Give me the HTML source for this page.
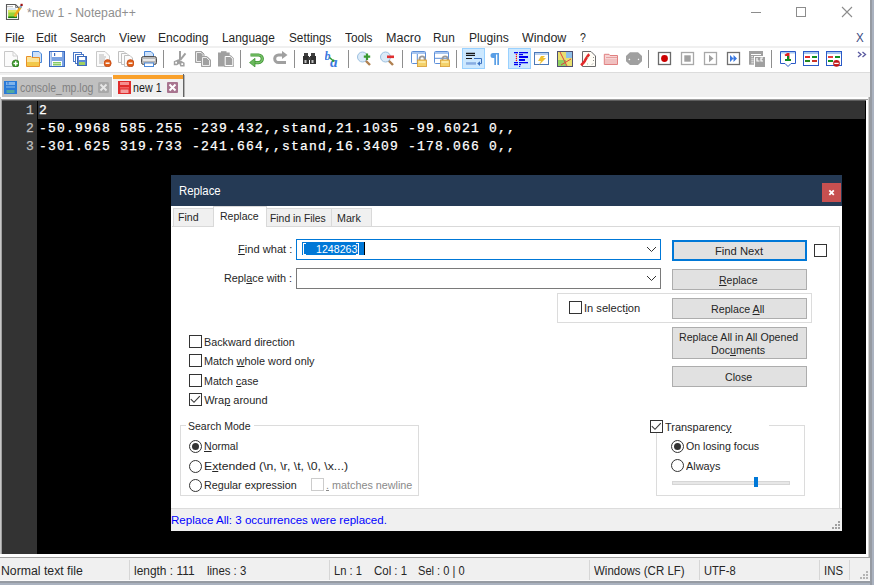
<!DOCTYPE html>
<html><head><meta charset="utf-8"><style>
*{margin:0;padding:0;box-sizing:border-box}
html,body{width:874px;height:585px;overflow:hidden;background:#aab2bf;font-family:"Liberation Sans",sans-serif}
.a{position:absolute}
.t{position:absolute;white-space:pre;line-height:1;transform-origin:0 0;font-family:"Liberation Sans",sans-serif}
.m{position:absolute;white-space:pre;line-height:18px;font-family:"Liberation Mono",monospace;font-size:13px;letter-spacing:1.2px;-webkit-text-stroke:0.25px}
u{text-decoration:underline;text-underline-offset:1px;text-decoration-thickness:1px}
.ic{position:absolute;width:16px;height:16px;top:51px}
.cb{position:absolute;width:13px;height:13px;border:1px solid #333;background:#fff}
.btn{position:absolute;background:#e1e1e1;border:1px solid #adadad}
.grp{position:absolute;border:1px solid #dcdcdc}
.sep{position:absolute;width:1px;top:50px;height:18px;background:#8e8e8e}
.ssep{position:absolute;width:1px;top:560px;height:20px;background:#d6d6d6}
</style></head><body>
<!-- window -->
<div class="a" style="left:0;top:0;width:870px;height:581px;background:#fff"></div>
<div class="a" style="left:870px;top:0;width:2px;height:585px;background:#969ba3"></div>
<div class="a" style="left:0;top:581px;width:872px;height:2px;background:#969ba3"></div>
<!-- menu line -->
<div class="a" style="left:0;top:46px;width:870px;height:2px;background:#f0f0f0"></div>
<!-- toolbar bottom line -->
<div class="a" style="left:0;top:72px;width:870px;height:1px;background:#dcdcdc"></div>
<!-- tab bar -->
<div class="a" style="left:0;top:73px;width:870px;height:24px;background:#f0f0f0"></div>
<div class="a" style="left:0;top:75px;width:113px;height:22px;background:#fff"></div>
<div class="a" style="left:2px;top:77px;width:110px;height:20px;background:#c0c0c0"></div>
<div class="a" style="left:113px;top:75px;width:71px;height:22px;background:#f0f0f0"></div>
<div class="a" style="left:113px;top:75px;width:70px;height:4px;background:#f9a12c"></div>
<div class="a" style="left:183px;top:74px;width:1px;height:24px;background:#646464"></div>
<div class="a" style="left:184px;top:75px;width:1px;height:23px;background:#b4b4b4"></div>
<!-- editor frame -->
<div class="a" style="left:0;top:97px;width:870px;height:460px;background:#fff"></div>
<div class="a" style="left:0;top:97px;width:1px;height:457px;background:#c8c8c8"></div>
<div class="a" style="left:1px;top:99px;width:1px;height:455px;background:#a0a0a0"></div>
<div class="a" style="left:1px;top:99px;width:867px;height:1px;background:#a0a0a0"></div>
<div class="a" style="left:868px;top:97px;width:1px;height:460px;background:#d0d0d0"></div>
<div class="a" style="left:869px;top:97px;width:1px;height:460px;background:#a0a0a0"></div>
<div class="a" style="left:2px;top:100px;width:864px;height:454px;background:#000"></div>
<div class="a" style="left:2px;top:100px;width:35px;height:454px;background:#333"></div>
<div class="a" style="left:2px;top:100px;width:864px;height:1px;background:#5e5e5e"></div>
<div class="a" style="left:38px;top:101px;width:827px;height:18px;background:#333"></div>
<!-- editor text -->
<div class="m" style="left:0;top:102px;width:35px;text-align:right;color:#c0c0c0">1<br>2<br>3</div>
<div class="m" style="left:39px;top:102px;color:#fff">2<br>-50.9968 585.255 -239.432,,stand,21.1035 -99.6021 0,,<br>-301.625 319.733 -241.664,,stand,16.3409 -178.066 0,,</div>
<!-- status bar -->
<div class="a" style="left:0;top:557px;width:870px;height:1px;background:#a0a0a0"></div>
<div class="a" style="left:0;top:558px;width:870px;height:23px;background:#f0f0f0"></div>
<div class="a" style="left:0;top:580px;width:870px;height:1px;background:#fafafa"></div>
<div class="ssep" style="left:129px"></div>
<div class="ssep" style="left:329px"></div>
<div class="ssep" style="left:589px"></div>
<div class="ssep" style="left:699px"></div>
<div class="ssep" style="left:819px"></div>
<div class="ssep" style="left:849px"></div>
<svg class="a" style="left:859px;top:570px" width="10" height="10" viewBox="0 0 10 10" fill="#b4b4b4"><rect x="7" y="1" width="2" height="2"/><rect x="4" y="4" width="2" height="2"/><rect x="7" y="4" width="2" height="2"/><rect x="1" y="7" width="2" height="2"/><rect x="4" y="7" width="2" height="2"/><rect x="7" y="7" width="2" height="2"/></svg>
<!-- title buttons -->
<div class="a" style="left:751px;top:12px;width:10px;height:1px;background:#8c8c8c"></div>
<div class="a" style="left:796px;top:7px;width:10px;height:10px;border:1px solid #8c8c8c"></div>
<svg class="a" style="left:841px;top:6px" width="12" height="12" viewBox="0 0 12 12"><path d="M1 1L11 11M11 1L1 11" stroke="#8c8c8c" stroke-width="1.1"/></svg>
<!-- app icon -->
<svg class="a" style="left:5px;top:3px" width="18" height="18" viewBox="0 0 18 18">
<path d="M1.5 1.5H10.5L13.5 4.5V16.5H1.5Z" fill="#fff" stroke="#5a5a5a" stroke-width="1.1"/>
<path d="M10.5 1.5V4.5H13.5" fill="none" stroke="#707070" stroke-width="0.8"/>
<path d="M3 3V4.2M5 3V4.2M7 3V4.2" stroke="#808080" stroke-width="1"/>
<rect x="3.2" y="5.5" width="8" height="1" fill="#b8d0e8"/>
<rect x="3.2" y="7" width="8.8" height="8" fill="#9ad43a"/>
<rect x="3.2" y="7" width="8.8" height="2.5" fill="#e0e860"/>
<rect x="3.2" y="13.5" width="8.8" height="1.6" fill="#1a7a10"/>
<path d="M9.5 13.5L16 3.5" stroke="#f0a818" stroke-width="2.4"/>
<path d="M15 5L16.5 2.5" stroke="#80a8d0" stroke-width="2"/>
<rect x="15.5" y="0.8" width="2.2" height="2.2" fill="#a01010"/>
</svg>
<!-- toolbar separators -->
<div class="sep" style="left:163px"></div>
<div class="sep" style="left:240px"></div>
<div class="sep" style="left:294px"></div>
<div class="sep" style="left:348px"></div>
<div class="sep" style="left:402px"></div>
<div class="sep" style="left:456px"></div>
<div class="sep" style="left:648px"></div>
<div class="sep" style="left:771px"></div>
<!-- new -->
<svg class="ic" style="left:3px" viewBox="0 0 16 16">
<path d="M1.5 0.5H10L14.5 5V15.5H1.5Z" fill="#fbfbfb" stroke="#c8c8c8"/>
<path d="M10 0.5V5H14.5" fill="none" stroke="#d0d0d0"/>
<circle cx="12.7" cy="12.5" r="3.6" fill="#3a9a2a" stroke="#2a6a1a" stroke-width="0.6"/>
<path d="M12.7 10.3V14.7M10.5 12.5H14.9" stroke="#fff" stroke-width="1.4"/>
</svg>
<!-- open -->
<svg class="ic" style="left:26px" viewBox="0 0 16 16">
<path d="M6.5 0.5H13L15.5 3V11.5H6.5Z" fill="#cfe2fa" stroke="#4a88d8"/>
<path d="M0.5 5.5H5L6 6.5H13.5V15.5H0.5Z" fill="#fbe49a" stroke="#e8902a"/>
<rect x="1" y="11" width="12" height="4" fill="#f2c84a"/>
</svg>
<!-- save -->
<svg class="ic" style="left:49px" viewBox="0 0 16 16">
<rect x="0.5" y="0.5" width="15" height="15" fill="#7aa2e2" stroke="#3a6ac0"/>
<rect x="1" y="1" width="1.5" height="14" fill="#c0d4f4"/>
<rect x="3" y="1" width="10" height="5" fill="#fff"/>
<rect x="5" y="2" width="1.2" height="3" fill="#3a6ac0"/>
<rect x="3" y="10" width="10" height="5" fill="#fff"/>
<rect x="4" y="11.2" width="8" height="1.2" fill="#6cc040"/>
<rect x="4" y="13.2" width="8" height="1.2" fill="#6cc040"/>
</svg>
<!-- save all -->
<svg class="ic" style="left:72px" viewBox="0 0 16 16">
<rect x="1.5" y="1.5" width="8" height="9" fill="#fff" stroke="#4a78c8"/>
<rect x="3.5" y="3.5" width="8" height="9" fill="#fff" stroke="#4a78c8"/>
<rect x="5.5" y="5.5" width="9" height="9" fill="#5b8ad6" stroke="#3a68b8"/>
<rect x="7" y="6" width="6" height="3" fill="#fff"/>
<rect x="7" y="11" width="6" height="3" fill="#a0d060"/>
</svg>
<!-- close -->
<svg class="ic" style="left:96px" viewBox="0 0 16 16">
<path d="M0.5 0.5H9L13.5 5V15.5H0.5Z" fill="#fbfbfb" stroke="#c8c8c8"/>
<path d="M3 4H8M3 6H10M3 8H9M3 10H8M3 12H7" stroke="#8a8a8a" stroke-width="0.6"/>
<circle cx="11.6" cy="12.2" r="3.6" fill="#e0601a" stroke="#b84010" stroke-width="0.6"/>
<path d="M9.6 12.2H13.6" stroke="#fff" stroke-width="1.4"/>
</svg>
<!-- close all -->
<svg class="ic" style="left:118px" viewBox="0 0 16 16">
<path d="M0.5 0.5H6L8.5 3V11.5H0.5Z" fill="#fbfbfb" stroke="#c0c0c0"/>
<path d="M3.5 2.5H9L11.5 5V13.5H3.5Z" fill="#fbfbfb" stroke="#c0c0c0"/>
<path d="M6.5 4.5H12L14.5 7V15.5H6.5Z" fill="#fbfbfb" stroke="#c0c0c0"/>
<circle cx="12.5" cy="12.2" r="3.6" fill="#e0601a" stroke="#b84010" stroke-width="0.6"/>
<path d="M10.5 12.2H14.5" stroke="#fff" stroke-width="1.4"/>
</svg>
<!-- print -->
<svg class="ic" style="left:141px" viewBox="0 0 16 16">
<path d="M3.5 0.5H10L12.5 3V7H3.5Z" fill="#cfe2fa" stroke="#4a88d8"/>
<rect x="0.5" y="5.5" width="15" height="8" rx="2" fill="#b8b8b8" stroke="#505050"/>
<rect x="2" y="8" width="12" height="2" fill="#e8e8e8"/>
<rect x="3.5" y="12" width="9" height="3.5" fill="#fff" stroke="#4a88d8"/>
</svg>
<!-- cut -->
<svg class="ic" style="left:172px" viewBox="0 0 16 16">
<path d="M8 0V9" stroke="#a0a0a0" stroke-width="2"/>
<path d="M13.5 2.3L8.3 8.8" stroke="#a0a0a0" stroke-width="2"/>
<path d="M1.8 10.2L6.5 8.3L8.6 9.6L12.6 11.8L12.6 15.5L8.4 15.5L7.3 12.8L5 14.2L1.8 14.2Z" fill="#a0a0a0"/>
<rect x="3.2" y="10.8" width="1.8" height="1.8" fill="#fff"/>
<rect x="9.3" y="12.2" width="1.8" height="1.8" fill="#fff"/>
</svg>
<!-- copy -->
<svg class="ic" style="left:195px" viewBox="0 0 16 16">
<path d="M0.5 0.5H6.5L9 3V11.5H0.5Z" fill="#a0a0a0" stroke="#a0a0a0"/>
<path d="M1.5 1.5H6L8 3.5V10.5H1.5Z" fill="#a0a0a0" stroke="#fff" stroke-width="0.8"/>
<path d="M6.5 5.5H12L15.5 9V15.5H6.5Z" fill="#a0a0a0" stroke="#a0a0a0"/>
<path d="M7.5 6.5H11.5L14.5 9.5V14.5H7.5Z" fill="#a0a0a0" stroke="#fff" stroke-width="0.8"/>
</svg>
<!-- paste -->
<svg class="ic" style="left:218px" viewBox="0 0 16 16">
<rect x="0" y="1.5" width="11.7" height="14" fill="#a0a0a0"/>
<rect x="3" y="0.2" width="5.5" height="2" fill="#a0a0a0"/>
<path d="M6 4.3H12.8L16 7.5V15.7H6Z" fill="#a0a0a0"/>
<path d="M7.2 5.5H12.3L14.8 8V14.5H7.2Z" fill="none" stroke="#fff" stroke-width="1"/>
</svg>
<!-- undo -->
<svg class="ic" style="left:249px" viewBox="0 0 16 16">
<path d="M1.5 4H9.5A3.8 3.8 0 0 1 9.5 11.6H5" fill="none" stroke="#3c9232" stroke-width="3.2"/>
<path d="M2 4H9.5A3.8 3.8 0 0 1 9.5 11.6H5" fill="none" stroke="#78c268" stroke-width="1.6"/>
<path d="M0.5 11.6L6 7.3V15.9Z" fill="#6ab85c" stroke="#3c9232" stroke-width="0.7"/>
</svg>
<!-- redo -->
<svg class="ic" style="left:272px" viewBox="0 0 16 16">
<path d="M14 11.6H6.5A3.8 3.8 0 0 1 6.5 4H11" fill="none" stroke="#a0a0a0" stroke-width="3"/>
<path d="M15.5 4L10 -0.1V8.1Z" fill="#a0a0a0"/>
</svg>
<!-- find -->
<svg class="ic" style="left:302px" viewBox="0 0 16 16">
<rect x="2" y="2" width="4" height="4" fill="#404040"/>
<rect x="9" y="2" width="4" height="4" fill="#404040"/>
<rect x="1" y="5" width="6" height="8" fill="#303030"/>
<rect x="8" y="5" width="6" height="8" fill="#303030"/>
<rect x="6" y="6" width="3" height="3" fill="#404040"/>
<rect x="2.5" y="9" width="2" height="3" fill="#c0c0c0"/>
<rect x="9.5" y="9" width="2" height="3" fill="#c0c0c0"/>
</svg>
<!-- replace -->
<svg class="a" style="left:325px;top:51px" width="18" height="16" viewBox="0 0 18 16">
<text x="-0.5" y="8.5" font-family="Liberation Serif" font-style="italic" font-weight="bold" font-size="12" fill="#3a78e0">b</text>
<text x="5" y="15.8" font-family="Liberation Serif" font-style="italic" font-weight="bold" font-size="15" fill="#3a78e0">a</text>
<path d="M4.5 6.5L8.5 10" stroke="#2a9a30" stroke-width="1.5"/>
<path d="M9.5 11L6.5 10.5L9 8Z" fill="#2a9a30"/>
</svg>
<!-- zoom in -->
<svg class="ic" style="left:356px" viewBox="0 0 16 16">
<path d="M9 9L14 14" stroke="#b08050" stroke-width="2.4"/>
<circle cx="6.5" cy="6" r="5" fill="#dbeaf8" stroke="#9cc0e0"/>
<path d="M11 2.5V9M7.8 5.7H14.2" stroke="#3a9a30" stroke-width="2.2"/>
</svg>
<!-- zoom out -->
<svg class="ic" style="left:379px" viewBox="0 0 16 16">
<path d="M9 9L14 14" stroke="#b08050" stroke-width="2.4"/>
<circle cx="6.5" cy="6" r="5" fill="#dbeaf8" stroke="#9cc0e0"/>
<rect x="8" y="4.5" width="7" height="2.6" fill="#e03030"/>
</svg>
<!-- sync v -->
<svg class="ic" style="left:411px" viewBox="0 0 16 16">
<rect x="0.5" y="0.5" width="14" height="12" rx="1" fill="#fff" stroke="#5c8ed8"/>
<rect x="1" y="1" width="13" height="2" fill="#a8c6f0"/>
<path d="M6.3 3V12.5" stroke="#5c8ed8"/>
<path d="M8.5 9V8A2.6 2.6 0 0 1 13.7 8V9" fill="none" stroke="#9a9a9a" stroke-width="1.9"/>
<rect x="6.5" y="9" width="9" height="6.6" fill="#f4d26a" stroke="#d89a30" stroke-width="0.8"/>
<rect x="7.5" y="10" width="7" height="2" fill="#fbe8a0"/>
</svg>
<!-- sync h -->
<svg class="ic" style="left:434px" viewBox="0 0 16 16">
<rect x="0.5" y="0.5" width="14" height="12" rx="1" fill="#fff" stroke="#5c8ed8"/>
<rect x="1" y="1" width="13" height="2" fill="#a8c6f0"/>
<path d="M1 7.3H14" stroke="#5c8ed8"/>
<path d="M8.5 9V8A2.6 2.6 0 0 1 13.7 8V9" fill="none" stroke="#9a9a9a" stroke-width="1.9"/>
<rect x="6.5" y="9" width="9" height="6.6" fill="#f4d26a" stroke="#d89a30" stroke-width="0.8"/>
<rect x="7.5" y="10" width="7" height="2" fill="#fbe8a0"/>
</svg>
<!-- wrap highlight -->
<div class="a" style="left:462px;top:48px;width:23px;height:21px;background:#cce8ff;border:1px solid #99d1ff"></div>
<svg class="ic" style="left:466px" viewBox="0 0 16 16">
<path d="M0 2.4H9M0 4.4H9M0 7.5H6" stroke="#1a1a1a" stroke-width="1.1"/>
<path d="M8 7.5H15.5V12.6H13.5" fill="none" stroke="#3a70c0" stroke-width="1"/>
<path d="M11.2 12.6L14 10.3V14.9Z" fill="#3a70c0"/>
<rect x="0" y="11.2" width="10" height="2.5" fill="#86ace2"/>
</svg>
<!-- pilcrow -->
<svg class="ic" style="left:489px" viewBox="0 0 16 16">
<path d="M4 2H10V14H8.3V3.6H7V14H5.3V7H4A2.5 2.5 0 0 1 4 2Z" fill="#5a9fe6"/>
</svg>
<!-- indent highlight -->
<div class="a" style="left:508px;top:48px;width:23px;height:21px;background:#cce8ff;border:1px solid #99d1ff"></div>
<svg class="ic" style="left:512px" viewBox="0 0 16 16">
<g fill="#0000f0">
<rect x="2" y="1" width="4" height="1.3"/><rect x="7" y="1" width="9" height="1.3"/>
<rect x="7" y="3" width="4" height="1.2"/>
<rect x="7" y="5" width="9" height="2"/>
<rect x="7" y="8" width="6" height="2"/>
<rect x="2" y="11" width="4" height="1.3"/><rect x="7" y="11" width="9" height="1.3"/>
<rect x="2" y="13" width="4" height="1.2"/><rect x="7" y="13" width="2" height="1.2"/>
<rect x="7" y="15" width="1.2" height="1.2"/>
</g>
<g fill="#ff1010"><circle cx="4.4" cy="3.5" r="0.7"/><circle cx="4.4" cy="5.5" r="0.7"/><circle cx="4.4" cy="7.5" r="0.7"/><circle cx="4.4" cy="9.5" r="0.7"/></g>
</svg>
<!-- udl -->
<svg class="ic" style="left:534px" viewBox="0 0 16 16">
<rect x="0.5" y="1.5" width="14" height="12" fill="#fff" stroke="#4a78b8"/>
<rect x="1" y="2" width="13" height="2" fill="#b8d0f0"/>
<path d="M7 5L4 10H7L5 14L12 7H9L11 5Z" fill="#f0c030"/>
</svg>
<!-- doc map -->
<svg class="ic" style="left:557px" viewBox="0 0 16 16">
<rect x="0.5" y="0.5" width="15" height="15" fill="#e8e070" stroke="#505070"/>
<rect x="9" y="1" width="6" height="6" fill="#90c0e8"/>
<rect x="1" y="9" width="8" height="6" fill="#90d060"/>
<path d="M3 1L10 15M14 8L4 14" stroke="#e04040" stroke-width="1"/>
</svg>
<!-- function list -->
<svg class="ic" style="left:580px" viewBox="0 0 16 16">
<path d="M2.5 0.5H11L15.5 5V15.5H2.5Z" fill="#fffdf6" stroke="#6a6a6a"/>
<path d="M1 14.2C2.5 13 3.5 12 4.8 10C6 8 7 5 9.3 3.2" stroke="#e42a2a" stroke-width="2.6" fill="none"/>
<path d="M13.5 6V7M13.5 9V10M13 12.5L12 13.5" stroke="#707070" stroke-width="0.8"/>
<path d="M7.5 6V7M7.5 12.5V13.5" stroke="#80c080" stroke-width="0.8"/>
</svg>
<!-- folder workspace -->
<svg class="ic" style="left:603px" viewBox="0 0 16 16">
<path d="M1.3 3.3H6L7 4.5H14.5V13.5H1.3Z" fill="#f6d4d4" stroke="#e08080"/>
<path d="M3 6.5H14" stroke="#e8a0a0" stroke-width="1"/>
<rect x="2" y="8" width="12" height="5" fill="#f0c0c0"/>
</svg>
<!-- monitoring blob -->
<svg class="ic" style="left:626px" viewBox="0 0 16 16">
<path d="M4 1.2H12L16 5V10.2L12 14H4L0 10.2V5Z" fill="#a0a0a0"/>
<path d="M2.8 9L4 7.8M12 8.8L13 8" stroke="#fff" stroke-width="1.1"/>
</svg>
<!-- record -->
<svg class="ic" style="left:657px" viewBox="0 0 16 16">
<rect x="1.5" y="1.5" width="12" height="12" fill="#fff" stroke="#6a6a6a" stroke-width="1.3"/>
<circle cx="7.5" cy="7.5" r="3.4" fill="#cc0000"/>
</svg>
<!-- stop -->
<svg class="ic" style="left:680px" viewBox="0 0 16 16">
<rect x="1.5" y="1.5" width="12" height="12" fill="#fff" stroke="#a8a8a8" stroke-width="1.3"/>
<rect x="4.3" y="4.3" width="6.4" height="6.4" fill="#a0a0a0"/>
</svg>
<!-- play -->
<svg class="ic" style="left:703px" viewBox="0 0 16 16">
<rect x="1.5" y="1.5" width="12" height="12" fill="#fff" stroke="#a8a8a8" stroke-width="1.3"/>
<path d="M6 3.8L10.5 7.5L6 11.2Z" fill="#a0a0a0"/>
</svg>
<!-- play multiple -->
<svg class="ic" style="left:726px" viewBox="0 0 16 16">
<rect x="1.5" y="1.5" width="12" height="12" fill="#fff" stroke="#707070" stroke-width="1.3"/>
<path d="M4 4L7.5 7.5L4 11ZM7.5 4L11 7.5L7.5 11Z" fill="#3a78e0"/>
</svg>
<!-- save macro -->
<svg class="ic" style="left:749px" viewBox="0 0 16 16">
<rect x="0" y="0" width="14" height="13.7" fill="#a0a0a0"/>
<g fill="#fff"><rect x="2" y="3" width="10" height="1"/><rect x="2.5" y="5" width="1.2" height="1.2"/><rect x="5" y="5" width="3" height="1"/><rect x="9" y="5" width="3" height="1"/>
<rect x="2.5" y="7.2" width="1.2" height="1.2"/><rect x="4.5" y="7.2" width="1.2" height="1.2"/><rect x="2.5" y="9.2" width="1.2" height="1.2"/><rect x="4.5" y="9.2" width="1.2" height="1.2"/><rect x="2.5" y="11.2" width="1.2" height="1.2"/><rect x="4.5" y="11.2" width="1.2" height="1.2"/></g>
<rect x="5.5" y="5.5" width="11" height="11" fill="#a0a0a0" stroke="#fff" stroke-width="1"/>
<rect x="6" y="6" width="10" height="10" fill="#a0a0a0"/>
<path d="M8 7V10H10.5M14 7H12V10H14" stroke="#fff" stroke-width="1.2" fill="none"/>
</svg>
<!-- bookmark compare 1 -->
<svg class="ic" style="left:780px" viewBox="0 0 16 16">
<path d="M0.5 0.5H15.5V12.5H11L8 15.5L5 12.5H0.5Z" fill="#fff" stroke="#2a5ac8"/>
<rect x="1" y="1" width="14" height="1.5" fill="#a8c8f0"/>
<path d="M5 4.5L7.5 3H8.5V8" stroke="#e02020" stroke-width="2" fill="none"/>
<rect x="7" y="5" width="2" height="3" fill="#108a20"/>
<rect x="5" y="8" width="6" height="2" fill="#108a20"/>
</svg>
<!-- compare 2 -->
<svg class="ic" style="left:803px" viewBox="0 0 16 16">
<rect x="0.5" y="0.5" width="15" height="14" fill="#fff" stroke="#2a5ac8"/>
<rect x="1" y="1" width="14" height="2" fill="#a8c8f0"/>
<path d="M2 6H7M2 10H7" stroke="#e02828" stroke-width="1.8"/>
<path d="M9 6H14M9 10H14" stroke="#109020" stroke-width="1.8"/>
<path d="M2 10H7" stroke="#109020" stroke-width="1.8"/>
<path d="M9 10H14" stroke="#e02828" stroke-width="1.8"/>
</svg>
<!-- compare 3 -->
<svg class="ic" style="left:826px" viewBox="0 0 16 16">
<rect x="0.5" y="0.5" width="15" height="14" fill="#fff" stroke="#2a5ac8"/>
<rect x="1" y="1" width="14" height="2" fill="#a8c8f0"/>
<path d="M2 6H7" stroke="#e02828" stroke-width="1.8"/>
<path d="M9 6H14M2 10H7" stroke="#109020" stroke-width="1.8"/>
<circle cx="10.5" cy="12.4" r="3.3" fill="#c01818"/>
<path d="M8.3 12.4H12.7" stroke="#fff" stroke-width="1.3"/>
</svg>
<!-- chevron -->
<svg class="a" style="left:857px;top:51px" width="10" height="7" viewBox="0 0 10 7"><path d="M1 1L4 3.5L1 6M5.5 1L8.5 3.5L5.5 6" stroke="#5a5aa0" stroke-width="1.3" fill="none"/></svg>
<!-- tab icons -->
<svg class="a" style="left:4px;top:81px" width="13" height="13" viewBox="0 0 13 13">
<rect x="0" y="0" width="13" height="13" fill="#2a7ad8"/>
<rect x="2" y="1" width="9" height="3" fill="#80b4ec"/>
<rect x="3.5" y="1" width="1" height="2.5" fill="#2a6ac8"/>
<rect x="2" y="5" width="9" height="2" fill="#5a9ae0"/>
<rect x="2.5" y="9" width="8" height="3" fill="#50a8a0"/>
</svg>
<svg class="a" style="left:98px;top:82px" width="11" height="11" viewBox="0 0 11 11">
<rect x="0" y="0" width="11" height="11" rx="1.5" fill="#a8a8a8"/>
<path d="M2.5 2.5L8.5 8.5M8.5 2.5L2.5 8.5" stroke="#e6e6e6" stroke-width="2"/>
</svg>
<svg class="a" style="left:118px;top:81px" width="13" height="13" viewBox="0 0 13 13">
<rect x="0" y="0" width="13" height="13" fill="#e02c2c"/>
<rect x="2" y="1" width="9" height="3" fill="#f59090"/>
<rect x="2" y="6" width="9" height="1.5" fill="#f06060"/>
<rect x="2.5" y="8.5" width="8" height="3.5" fill="#f4a0a0"/>
</svg>
<svg class="a" style="left:167px;top:82px" width="11" height="11" viewBox="0 0 11 11">
<rect x="0" y="0" width="11" height="11" rx="1" fill="#a8748f"/>
<path d="M2.5 2.5L8.5 8.5M8.5 2.5L2.5 8.5" stroke="#fff" stroke-width="2"/>
</svg>

<!-- DIALOG -->
<div class="a" style="left:171px;top:175px;width:671px;height:356px;background:#fff"></div>
<div class="a" style="left:171px;top:175px;width:671px;height:31px;background:#253a55"></div>
<div class="a" style="left:822px;top:183px;width:19px;height:19px;background:#c75050"></div>
<svg class="a" style="left:822px;top:183px" width="19" height="19" viewBox="0 0 19 19"><path d="M7.3 7.3L11.8 11.8M11.8 7.3L7.3 11.8" stroke="#fff" stroke-width="1.8"/></svg>
<!-- tabs -->
<div class="a" style="left:172px;top:226px;width:668px;height:1px;background:#d9d9d9"></div>
<div class="a" style="left:839px;top:226px;width:1px;height:282px;background:#d9d9d9"></div>
<div class="a" style="left:173px;top:208px;width:41px;height:19px;background:#f0f0f0;border:1px solid #d9d9d9"></div>
<div class="a" style="left:266px;top:208px;width:66px;height:19px;background:#f0f0f0;border:1px solid #d9d9d9"></div>
<div class="a" style="left:331px;top:208px;width:41px;height:19px;background:#f0f0f0;border:1px solid #d9d9d9"></div>
<div class="a" style="left:213px;top:206px;width:54px;height:21px;background:#fff;border:1px solid #d9d9d9;border-bottom:none"></div>
<!-- combos -->
<div class="a" style="left:296px;top:239px;width:365px;height:21px;border:1px solid #0078d7;background:#fff"></div>
<div class="a" style="left:302px;top:242px;width:62px;height:13px;background:#0078d7"></div>
<div class="a" style="left:364px;top:242px;width:1px;height:13px;background:#000"></div>
<div class="a" style="left:303px;top:243px;width:1px;height:12px;background:#fff"></div>
<div class="a" style="left:303px;top:243px;width:3px;height:1px;background:#fff"></div>
<div class="a" style="left:303px;top:254px;width:3px;height:1px;background:#fff"></div>
<div class="a" style="left:358px;top:243px;width:1px;height:12px;background:#fff"></div>
<div class="a" style="left:356px;top:243px;width:3px;height:1px;background:#fff"></div>
<div class="a" style="left:356px;top:254px;width:3px;height:1px;background:#fff"></div>
<svg class="a" style="left:646px;top:246px" width="11" height="7" viewBox="0 0 11 7"><path d="M1 1L5.5 5.5L10 1" stroke="#333" stroke-width="1" fill="none"/></svg>
<div class="a" style="left:296px;top:268px;width:365px;height:21px;border:1px solid #7a7a7a;background:#fff"></div>
<svg class="a" style="left:646px;top:275px" width="11" height="7" viewBox="0 0 11 7"><path d="M1 1L5.5 5.5L10 1" stroke="#333" stroke-width="1" fill="none"/></svg>
<!-- buttons -->
<div class="btn" style="left:672px;top:240px;width:135px;height:21px;border:2px solid #0078d7"></div>
<div class="btn" style="left:672px;top:269px;width:135px;height:21px"></div>
<div class="btn" style="left:672px;top:298px;width:135px;height:21px"></div>
<div class="btn" style="left:672px;top:327px;width:135px;height:32px"></div>
<div class="btn" style="left:672px;top:366px;width:135px;height:21px"></div>
<div class="cb" style="left:814px;top:244px"></div>
<div class="grp" style="left:557px;top:293px;width:255px;height:30px"></div>
<div class="cb" style="left:569px;top:301px"></div>
<!-- checkboxes -->
<div class="cb" style="left:189px;top:335px"></div>
<div class="cb" style="left:189px;top:354px"></div>
<div class="cb" style="left:189px;top:374px"></div>
<div class="cb" style="left:189px;top:393px"></div>
<svg class="a" style="left:189px;top:393px" width="13" height="13" viewBox="0 0 13 13"><path d="M1.8 6.2L5 9.3L10.8 3.2" stroke="#3a3a3a" stroke-width="1.15" fill="none"/></svg>
<!-- search mode -->
<div class="grp" style="left:180px;top:425px;width:239px;height:71px"></div>
<div class="a" style="left:186px;top:420px;width:68px;height:12px;background:#fff"></div>
<svg class="a" style="left:189px;top:440px" width="13" height="13" viewBox="0 0 13 13"><circle cx="6.5" cy="6.5" r="6" stroke="#333" fill="#fff"/><circle cx="6.5" cy="6.5" r="3.5" fill="#333"/></svg>
<svg class="a" style="left:189px;top:460px" width="13" height="13" viewBox="0 0 13 13"><circle cx="6.5" cy="6.5" r="6" stroke="#333" fill="#fff"/></svg>
<svg class="a" style="left:189px;top:479px" width="13" height="13" viewBox="0 0 13 13"><circle cx="6.5" cy="6.5" r="6" stroke="#333" fill="#fff"/></svg>
<div class="cb" style="left:311px;top:478px;border-color:#cccccc"></div>
<!-- transparency -->
<div class="grp" style="left:656px;top:425px;width:149px;height:71px"></div>
<div class="a" style="left:648px;top:418px;width:121px;height:14px;background:#fff"></div>
<div class="cb" style="left:650px;top:420px"></div>
<svg class="a" style="left:650px;top:420px" width="13" height="13" viewBox="0 0 13 13"><path d="M1.8 6.2L5 9.3L10.8 3.2" stroke="#3a3a3a" stroke-width="1.15" fill="none"/></svg>
<svg class="a" style="left:671px;top:440px" width="13" height="13" viewBox="0 0 13 13"><circle cx="6.5" cy="6.5" r="6" stroke="#333" fill="#fff"/><circle cx="6.5" cy="6.5" r="3.5" fill="#333"/></svg>
<svg class="a" style="left:671px;top:459px" width="13" height="13" viewBox="0 0 13 13"><circle cx="6.5" cy="6.5" r="6" stroke="#333" fill="#fff"/></svg>
<div class="a" style="left:672px;top:481px;width:118px;height:4px;background:#e7e7e7;border:1px solid #d6d6d6"></div>
<div class="a" style="left:754px;top:477px;width:4px;height:10px;background:#0078d7"></div>
<!-- dialog status -->
<div class="a" style="left:171px;top:508px;width:671px;height:1px;background:#dcdcdc"></div>
<div class="a" style="left:171px;top:509px;width:671px;height:22px;background:#f0f0f0"></div>
<svg class="a" style="left:832px;top:521px" width="10" height="10" viewBox="0 0 10 10" fill="#a0a0a0"><rect x="6" y="0" width="2" height="2"/><rect x="3" y="3" width="2" height="2"/><rect x="6" y="3" width="2" height="2"/><rect x="0" y="6" width="2" height="2"/><rect x="3" y="6" width="2" height="2"/><rect x="6" y="6" width="2" height="2"/></svg>
<span class="t" style="left:26.5px;top:6.8px;font-size:12px;color:#8f8f8f;transform:scaleX(1.019)">*new 1 - Notepad++</span>
<span class="t" style="left:4.5px;top:31.8px;font-size:12px;color:#262626;transform:scaleX(1.003)">File</span>
<span class="t" style="left:36.4px;top:31.8px;font-size:12px;color:#262626;transform:scaleX(1.005)">Edit</span>
<span class="t" style="left:70.4px;top:31.8px;font-size:12px;color:#262626;transform:scaleX(0.936)">Search</span>
<span class="t" style="left:119.2px;top:31.8px;font-size:12px;color:#262626;transform:scaleX(1.020)">View</span>
<span class="t" style="left:158.4px;top:31.8px;font-size:12px;color:#262626;transform:scaleX(1.011)">Encoding</span>
<span class="t" style="left:222.4px;top:31.8px;font-size:12px;color:#262626;transform:scaleX(0.989)">Language</span>
<span class="t" style="left:288.6px;top:31.8px;font-size:12px;color:#262626;transform:scaleX(0.980)">Settings</span>
<span class="t" style="left:344.6px;top:31.8px;font-size:12px;color:#262626;transform:scaleX(0.982)">Tools</span>
<span class="t" style="left:385.6px;top:31.8px;font-size:12px;color:#262626;transform:scaleX(1.047)">Macro</span>
<span class="t" style="left:433.2px;top:31.8px;font-size:12px;color:#262626;transform:scaleX(0.986)">Run</span>
<span class="t" style="left:468.7px;top:31.8px;font-size:12px;color:#262626;transform:scaleX(1.009)">Plugins</span>
<span class="t" style="left:521.8px;top:31.8px;font-size:12px;color:#262626;transform:scaleX(1.040)">Window</span>
<span class="t" style="left:579.7px;top:31.8px;font-size:12px;color:#262626;transform:scaleX(0.882)">?</span>
<span class="t" style="left:855.7px;top:31.8px;font-size:12px;color:#3a4a80;transform:scaleX(0.961)">X</span>
<span class="t" style="left:20.0px;top:82.3px;font-size:12px;color:#808080;transform:scaleX(0.872)">console_mp.log</span>
<span class="t" style="left:133.3px;top:82.2px;font-size:12px;color:#1a1a1a;transform:scaleX(0.893)">new 1</span>
<span class="t" style="left:0.8px;top:564.8px;font-size:12px;color:#262626;transform:scaleX(1.022)">Normal text file</span>
<span class="t" style="left:133.8px;top:564.8px;font-size:12px;color:#262626;transform:scaleX(0.993)">length : 111</span>
<span class="t" style="left:206.9px;top:564.8px;font-size:12px;color:#262626;transform:scaleX(0.950)">lines : 3</span>
<span class="t" style="left:333.8px;top:564.8px;font-size:12px;color:#262626;transform:scaleX(0.932)">Ln : 1</span>
<span class="t" style="left:374.0px;top:564.8px;font-size:12px;color:#262626;transform:scaleX(0.954)">Col : 1</span>
<span class="t" style="left:418.2px;top:564.8px;font-size:12px;color:#262626;transform:scaleX(0.923)">Sel : 0 | 0</span>
<span class="t" style="left:593.7px;top:564.8px;font-size:12px;color:#262626;transform:scaleX(0.957)">Windows (CR LF)</span>
<span class="t" style="left:703.7px;top:564.8px;font-size:12px;color:#262626;transform:scaleX(0.929)">UTF-8</span>
<span class="t" style="left:823.6px;top:564.8px;font-size:12px;color:#262626;transform:scaleX(0.949)">INS</span>
<span class="t" style="left:178.8px;top:185.1px;font-size:12px;color:#ffffff;transform:scaleX(0.945)">Replace</span>
<span class="t" style="left:177.9px;top:212.4px;font-size:11px;color:#262626;transform:scaleX(0.967)">Find</span>
<span class="t" style="left:220.0px;top:211.2px;font-size:11px;color:#262626;transform:scaleX(0.956)">Replace</span>
<span class="t" style="left:270.0px;top:212.8px;font-size:11px;color:#262626;transform:scaleX(0.941)">Find in Files</span>
<span class="t" style="left:337.0px;top:212.8px;font-size:11px;color:#262626;transform:scaleX(0.973)">Mark</span>
<span class="t" style="left:237.7px;top:244.2px;font-size:11px;color:#262626;transform:scaleX(1.009)"><u>F</u>ind what :</span>
<span class="t" style="left:315.7px;top:244.2px;font-size:11px;color:#ffffff;transform:scaleX(0.967)">1248263</span>
<span class="t" style="left:224.0px;top:272.5px;font-size:11px;color:#262626;transform:scaleX(0.984)">Repl<u>a</u>ce with :</span>
<span class="t" style="left:714.7px;top:246.2px;font-size:11px;color:#262626;transform:scaleX(1.020)">Find Next</span>
<span class="t" style="left:718.9px;top:275.2px;font-size:11px;color:#262626;transform:scaleX(0.954)"><u>R</u>eplace</span>
<span class="t" style="left:711.4px;top:304.2px;font-size:11px;color:#262626;transform:scaleX(0.970)">Replace <u>A</u>ll</span>
<span class="t" style="left:584.0px;top:302.8px;font-size:11px;color:#262626;transform:scaleX(1.010)">In select<u>i</u>on</span>
<span class="t" style="left:678.5px;top:332.2px;font-size:11px;color:#262626;transform:scaleX(0.965)">Replace All in All Opened</span>
<span class="t" style="left:710.7px;top:344.5px;font-size:11px;color:#262626;transform:scaleX(0.971)">Doc<u>u</u>ments</span>
<span class="t" style="left:724.9px;top:372.3px;font-size:11px;color:#262626;transform:scaleX(0.964)">Close</span>
<span class="t" style="left:203.9px;top:336.8px;font-size:11px;color:#262626;transform:scaleX(0.977)">Backward direction</span>
<span class="t" style="left:203.9px;top:356.0px;font-size:11px;color:#262626;transform:scaleX(0.988)">Match <u>w</u>hole word only</span>
<span class="t" style="left:204.2px;top:376.1px;font-size:11px;color:#262626;transform:scaleX(0.969)">Match <u>c</u>ase</span>
<span class="t" style="left:204.2px;top:394.9px;font-size:11px;color:#262626;transform:scaleX(1.000)">Wra<u>p</u> around</span>
<span class="t" style="left:188.1px;top:421.2px;font-size:11px;color:#262626;transform:scaleX(0.955)">Search Mode</span>
<span class="t" style="left:203.9px;top:440.5px;font-size:11px;color:#262626;transform:scaleX(0.962)"><u>N</u>ormal</span>
<span class="t" style="left:203.9px;top:461.2px;font-size:11px;color:#262626;transform:scaleX(1.112)">E<u>x</u>tended (\n, \r, \t, \0, \x...)</span>
<span class="t" style="left:203.9px;top:480.0px;font-size:11px;color:#262626;transform:scaleX(0.978)">Re<u>g</u>ular expression</span>
<span class="t" style="left:326.0px;top:480.0px;font-size:11px;color:#8a8a8a;transform:scaleX(0.981)"><u>.</u> matches newline</span>
<span class="t" style="left:665.1px;top:421.8px;font-size:11px;color:#262626;transform:scaleX(0.995)">Transparenc<u>y</u></span>
<span class="t" style="left:686.4px;top:440.7px;font-size:11px;color:#262626;transform:scaleX(0.965)">On losing focus</span>
<span class="t" style="left:686.4px;top:460.9px;font-size:11px;color:#262626;transform:scaleX(0.990)">Always</span>
<span class="t" style="left:171.1px;top:514.6px;font-size:11px;color:#0000ff;transform:scaleX(1.051)">Replace All: 3 occurrences were replaced.</span>
</body></html>
